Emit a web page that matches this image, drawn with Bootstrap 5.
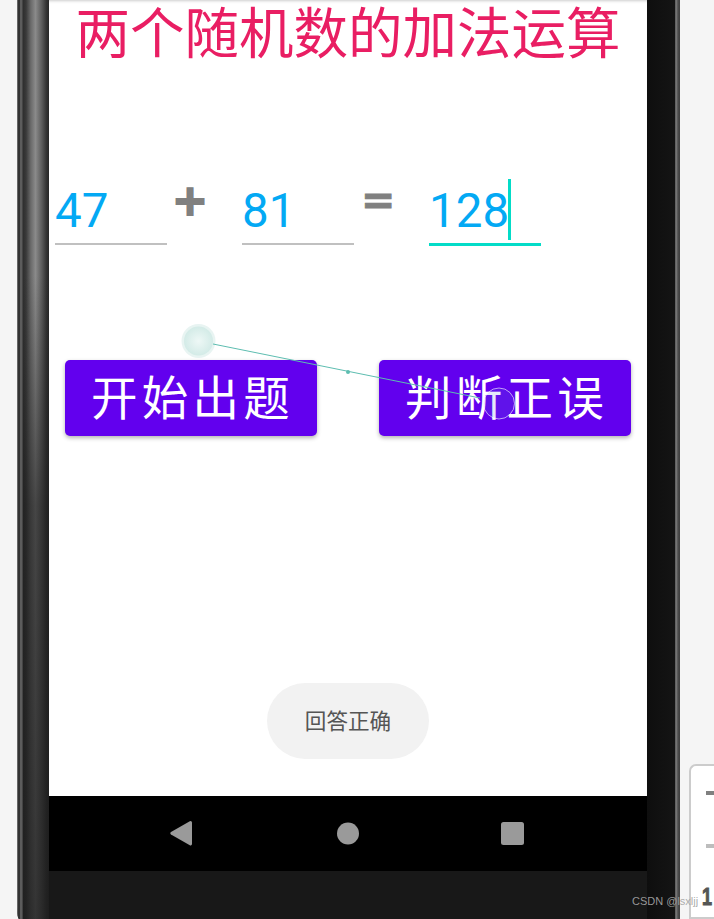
<!DOCTYPE html>
<html lang="zh">
<head>
<meta charset="utf-8">
<title>两个随机数的加法运算</title>
<link href="https://cdn.jsdelivr.net/npm/bootstrap@5.3.0/dist/css/bootstrap.min.css" rel="stylesheet">
<style>
html,body{height:919px;overflow:hidden;}
body{background:#f5f5f5;font-family:"Noto Sans CJK SC","Liberation Sans",sans-serif;}
.stage{height:919px;width:714px;position:relative;overflow:hidden;}
.device{width:663px;margin-left:17px;height:919px;background:#181818;flex:none;overflow:hidden;border-bottom-left-radius:2px 12px;}
.bezel-l{width:32px;flex:none;background:
  linear-gradient(90deg,#666 0,#666 20%,#333 24%,#333 50%,#5c5c5c 54%,#5c5c5c 80%,#333 100%) left top/6px 100% no-repeat,
  linear-gradient(180deg,rgba(28,28,28,0) 30%,rgba(28,28,28,.62) 55%,rgba(28,28,28,.78) 100%) 6px 0/26px 100% no-repeat,
  linear-gradient(90deg,#2e2e2e 0,#3a3a3a 12%,#6a6a6a 30%,#8a8a8a 48%,#5c5c5c 72%,#333 90%,#262626 100%) 6px 0/26px 100% no-repeat;}
.bezel-r{width:33px;flex:none;background:linear-gradient(90deg,#0e0e0e 0,#141414 84%,#4a4a4a 85%,#808080 88%,#666 91%,#4c4c4c 94%,#404040 100%);}
.screen{width:598px;flex:none;}
.app{height:796px;background:#fff;position:relative;box-shadow:inset 0 3px 3px -2px #ccc;}
.app-title{font-family:Roboto,"Noto Sans CJK SC",sans-serif;font-size:54.500px;line-height:69px;color:#e91e63;text-align:center;margin:0;font-weight:400;}
.eq-row{padding:110px 0 0 6px;height:181px;}
.eq-field{width:112px;height:66px;border-bottom:2px solid #c0c0c0;font-family:Roboto,sans-serif;font-size:47.500px;line-height:64px;color:#03a9f4;}
.eq-field.is-on{border-bottom:3px solid #03dcc8;height:67px;}
.eq-caret{display:inline-block;width:3px;height:61px;background:#03dcc8;vertical-align:top;margin:0 0 0 -1px;}
.eq-op{width:75px;height:65px;font-family:"DejaVu Sans",sans-serif;font-weight:700;color:#808080;}
.op-plus{font-size:43px;line-height:43px;padding-left:5px;-webkit-text-stroke:2px #808080;}
.op-eq{font-size:41px;line-height:43px;padding-left:7px;-webkit-text-stroke:1px #808080;}
.act-row{padding:110px 16px 0;}
.act-btn{width:252px;height:76px;background:#6200ee;color:#fff;border:0;border-radius:5px;padding:0 0 6px 3px;font-size:46.500px;line-height:70px;letter-spacing:4.200px;box-shadow:0 2px 4px rgba(0,0,0,.3);}
.act-btn:hover{background:#6200ee;color:#fff;}
.toast-zone{position:absolute;left:0;right:0;top:683px;}
.toast-pill{width:162px;height:76px;border-radius:38px;background:#f2f2f2;color:#555;font-size:21.600px;line-height:74px;text-align:center;}
.nav-bar{height:75px;background:#000;}
.touch-layer{position:absolute;left:0;top:0;pointer-events:none;}
.side-panel{flex:1;margin:764px 0 0 9px;background:#fff;border:2px solid #ccc;border-right:0;border-radius:7px 0 0 0;position:relative;height:155px;}
.side-dash{position:absolute;left:15px;width:10px;height:4px;background:#808080;}
.side-dash.d1{top:25px;}
.side-dash.d2{top:78px;background:#bdbdbd;}
.side-num{position:absolute;left:11px;top:117px;font:700 24px/28px "Liberation Sans",sans-serif;color:#555;-webkit-text-stroke:1px #555;transform:scaleX(.75);transform-origin:left top;}
.wmark{position:absolute;left:632px;top:894px;font:11px/14px "Liberation Sans",sans-serif;color:rgba(165,165,165,.92);}
</style>
</head>
<body class="m-0">
<div class="stage d-flex">
  <div class="device d-flex">
    <div class="bezel-l"></div>
    <div class="screen d-flex flex-column">
      <div class="app">
        <h1 class="app-title">两个随机数的加法运算</h1>
        <div class="eq-row d-flex align-items-start">
          <div class="eq-field">47</div>
          <div class="eq-op op-plus">+</div>
          <div class="eq-field">81</div>
          <div class="eq-op op-eq">=</div>
          <div class="eq-field is-on">128<span class="eq-caret"></span></div>
        </div>
        <div class="act-row d-flex justify-content-between">
          <button class="btn act-btn" type="button">开始出题</button>
          <button class="btn act-btn" type="button">判断正误</button>
        </div>
        <div class="toast-zone d-flex justify-content-center">
          <div class="toast-pill">回答正确</div>
        </div>
      </div>
      <div class="nav-bar d-flex align-items-center">
        <svg width="598" height="75" viewBox="0 0 598 75">
          <path d="M143 26.500v21.500a1.500 1.500 0 0 1-2.200 1.200L122 38.500a1.500 1.500 0 0 1 0-2.500l18.800-10.700a1.500 1.500 0 0 1 2.200 1.200z" fill="#9a9a9a"/>
          <circle cx="299" cy="37.500" r="11" fill="#9a9a9a"/>
          <rect x="452" y="26" width="23" height="23" rx="2.500" fill="#9a9a9a"/>
        </svg>
      </div>
    </div>
    <div class="bezel-r"></div>
  </div>
  <div class="side-panel">
    <div class="side-dash d1"></div>
    <div class="side-dash d2"></div>
    <div class="side-num">1</div>
  </div>
  <svg class="touch-layer" width="714" height="919" viewBox="0 0 714 919">
    <defs>
      <radialGradient id="tg"><stop offset="0" stop-color="#eef8f6"/><stop offset="1" stop-color="#d3ebe7"/></radialGradient>
    </defs>
    <circle cx="198.500" cy="341" r="17" fill="#e8f4f2"/>
    <circle cx="198.500" cy="341" r="14.500" fill="url(#tg)"/>
    <line x1="213" y1="344" x2="480" y2="398" stroke="#5dbdb0" stroke-width="1"/>
    <circle cx="348" cy="372" r="2" fill="#5dbdb0"/>
    <circle cx="499" cy="403.500" r="15.500" fill="rgba(90,120,220,.16)" stroke="rgba(255,255,255,.6)" stroke-width="1"/>
  </svg>
  <div class="wmark">CSDN @lsxljj</div>
</div>
<script src="https://cdn.jsdelivr.net/npm/bootstrap@5.3.0/dist/js/bootstrap.bundle.min.js"></script>
</body>
</html>
